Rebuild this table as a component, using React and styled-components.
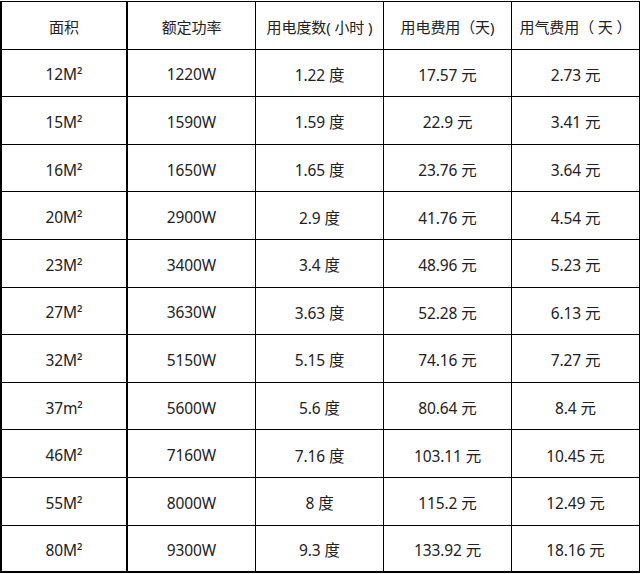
import styled, { createGlobalStyle } from "styled-components"

const Global = createGlobalStyle`
  body{
    margin: 0;
    background: #fff;
    font-family: "Noto Sans", "Noto Sans CJK SC", sans-serif;
  }
`

const header = ["面积", "额定功率", "用电度数( 小时 )", "用电费用（天)", "用气费用（ 天 ）"]

const rows = [
  ["12M²", "1220W", "1.22 度", "17.57 元", "2.73 元"],
  ["15M²", "1590W", "1.59 度", "22.9 元", "3.41 元"],
  ["16M²", "1650W", "1.65 度", "23.76 元", "3.64 元"],
  ["20M²", "2900W", "2.9 度", "41.76 元", "4.54 元"],
  ["23M²", "3400W", "3.4 度", "48.96 元", "5.23 元"],
  ["27M²", "3630W", "3.63 度", "52.28 元", "6.13 元"],
  ["32M²", "5150W", "5.15 度", "74.16 元", "7.27 元"],
  ["37m²", "5600W", "5.6 度", "80.64 元", "8.4 元"],
  ["46M²", "7160W", "7.16 度", "103.11 元", "10.45 元"],
  ["55M²", "8000W", "8 度", "115.2 元", "12.49 元"],
  ["80M²", "9300W", "9.3 度", "133.92 元", "18.16 元"],
]

export default function App(){
    const all = [header, ...rows]
    return(
        <>
            <Global/>
            <Table>
                {all.map((row, r)=>(
                    row.map((text, c)=>(
                        <Cell key={r + "-" + c} $first={c === 0} $last={r === all.length - 1} $head={r === 0}>
                            {text}
                        </Cell>
                    ))
                ))}
            </Table>
        </>
    )
}

const Table = styled.div`
    display: grid;
    grid-template-columns: 126px 128px 128px 128px 128px;
    grid-auto-rows: 47.6px;
    width: 640px;
    margin-top: 1px;
    border-top: 1px solid #000;
    border-left: 2px solid #000;
    box-sizing: border-box;
`

const Cell = styled.div`
    display: flex;
    align-items: center;
    justify-content: center;
    box-sizing: border-box;
    border-right: ${p => p.$first ? "2px" : "1px"} solid #000;
    border-bottom: ${p => p.$last ? "2px" : "1px"} solid #000;
    padding-top: 3px;
    font-size: ${p => p.$head ? "15px" : "15.5px"};
    color: #222;
    white-space: nowrap;
    letter-spacing: -0.1px;
`
